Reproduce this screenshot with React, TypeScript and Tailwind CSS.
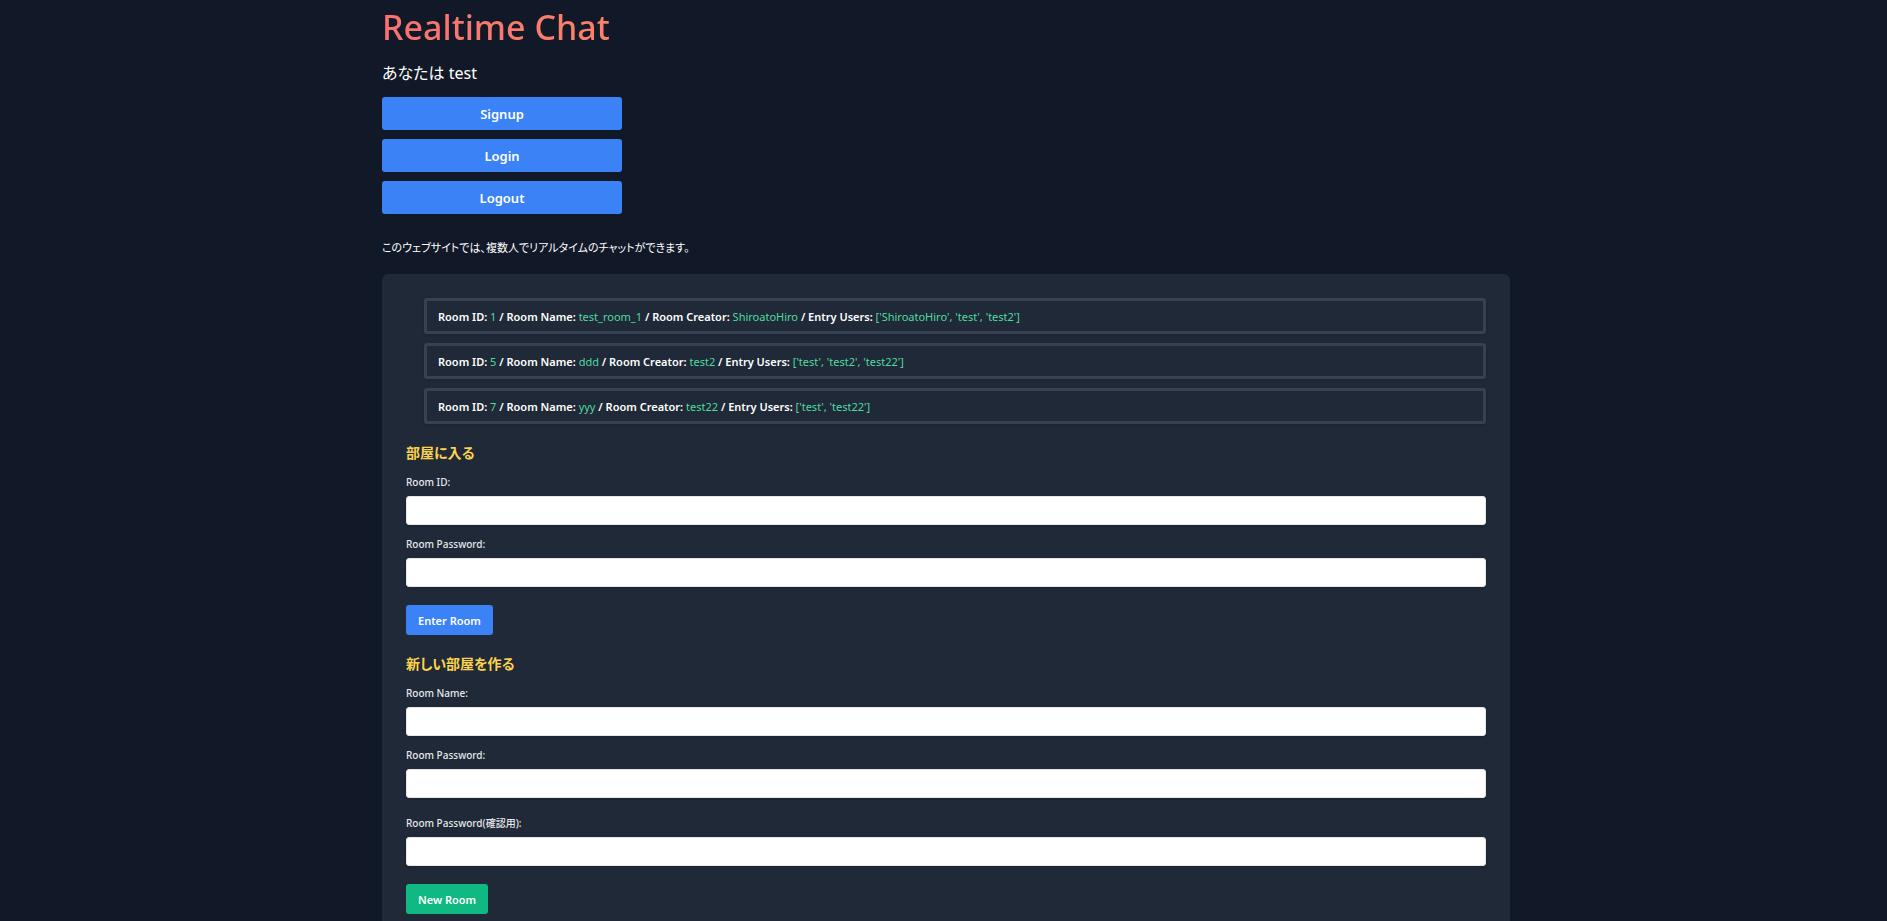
import type { ReactNode } from "react";

type Room = { id: number; name: string; creator: string; users: string };

const rooms: Room[] = [
  { id: 1, name: "test_room_1", creator: "ShiroatoHiro", users: "['ShiroatoHiro', 'test', 'test2']" },
  { id: 5, name: "ddd", creator: "test2", users: "['test', 'test2', 'test22']" },
  { id: 7, name: "yyy", creator: "test22", users: "['test', 'test22']" },
];

function Value({ children }: { children: ReactNode }) {
  return <span className="font-normal text-[#4fdba0]">{children}</span>;
}

function RoomRow({ room }: { room: Room }) {
  return (
    <li className="rounded-[3px] border-[3px] border-[#374151] px-[11px] pt-[7px] pb-[5px] leading-[18px] font-semibold shadow-sm">
      Room ID: <Value>{room.id}</Value> / Room Name: <Value>{room.name}</Value> / Room Creator:{" "}
      <Value>{room.creator}</Value> / Entry Users: <Value>{room.users}</Value>
    </li>
  );
}

function Field({ id, label, type = "text" }: { id: string; label: string; type?: string }) {
  return (
    <div>
      <label htmlFor={id} className="mb-[6px] block text-[10px] leading-[15px] font-medium text-[#e5e7eb]">
        {label}
      </label>
      <input
        id={id}
        type={type}
        className="block h-[29px] w-full rounded-[3px] border border-[#e5e7eb] bg-white px-2 text-[#111827] shadow-sm"
      />
    </div>
  );
}

function SectionTitle({ children }: { children: ReactNode }) {
  return (
    <h2 className="mb-3 text-[14px] leading-5 font-semibold text-[#fcd34d] [font-feature-settings:'palt']">
      {children}
    </h2>
  );
}

export default function App() {
  return (
    <div className="min-h-screen bg-[#111827] pl-[5px] font-['Noto_Sans','Noto_Sans_CJK_JP',sans-serif] text-[11px] text-white">
      <main className="mx-auto max-w-[1128px]">
        <h1 className="bg-linear-to-r from-[#f87171] to-[#fbbf24] bg-clip-text text-[34px] leading-[54px] font-medium text-transparent">
          Realtime Chat
        </h1>
        <p className="mt-[6px] mb-[10px] text-[16px] leading-[27px] [font-feature-settings:'palt']">あなたは test</p>
        <nav className="flex w-60 flex-col gap-[9px] text-center text-[13px] leading-[31px] font-semibold">
          {["Signup", "Login", "Logout"].map((name) => (
            <a key={name} href={"#" + name.toLowerCase()} className="block rounded-[3px] bg-[#3b82f6] pt-[2px]">
              {name}
            </a>
          ))}
        </nav>
        <p className="mt-6 mb-4 leading-5 [font-feature-settings:'palt']">
          このウェブサイトでは、複数人でリアルタイムのチャットができます。
        </p>
        <section className="rounded-t-md bg-[#1f2937] px-6 pt-6 pb-[7px]">
          <ul className="mb-[19px] flex flex-col gap-[9px] pl-[18px]">
            {rooms.map((room) => (
              <RoomRow key={room.id} room={room} />
            ))}
          </ul>
          <form className="mb-[19px]">
            <SectionTitle>部屋に入る</SectionTitle>
            <div className="flex flex-col gap-3">
              <Field id="enter-id" label="Room ID:" />
              <Field id="enter-password" label="Room Password:" type="password" />
            </div>
            <button type="button" className="mt-[18px] block h-[30px] rounded-[3px] bg-[#3b82f6] px-3 pt-[2px] font-semibold">
              Enter Room
            </button>
          </form>
          <form>
            <SectionTitle>新しい部屋を作る</SectionTitle>
            <div className="flex flex-col gap-3">
              <Field id="new-name" label="Room Name:" />
              <Field id="new-password" label="Room Password:" type="password" />
            </div>
            <div className="mt-[18px]">
              <Field id="new-confirm" label="Room Password(確認用):" type="password" />
            </div>
            <button type="button" className="mt-[18px] block h-[30px] rounded-[3px] bg-[#10b981] px-3 pt-[2px] font-semibold">
              New Room
            </button>
          </form>
        </section>
      </main>
    </div>
  );
}
